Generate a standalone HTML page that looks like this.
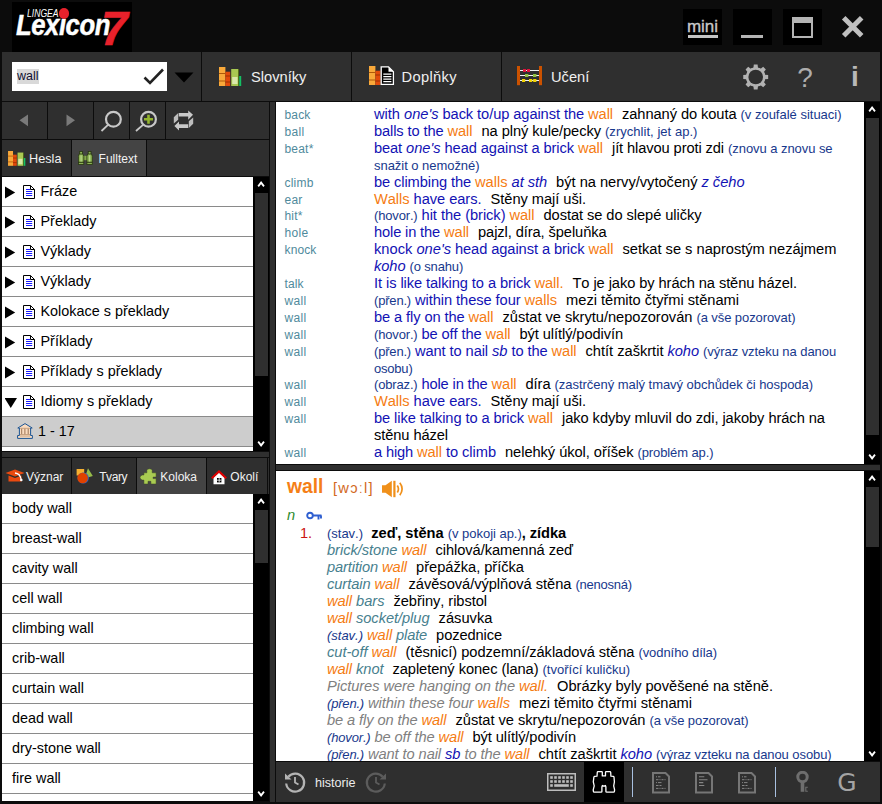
<!DOCTYPE html>
<html lang="cs">
<head>
<meta charset="utf-8">
<title>Lingea Lexicon 7</title>
<style>
*{box-sizing:border-box;margin:0;padding:0}
html,body{width:882px;height:804px;overflow:hidden;background:#0c0c0c}
body{position:relative;font-kerning:none;font-family:"Liberation Sans",Arial,sans-serif;font-size:15px;color:#000}
.abs{position:absolute}
#title{left:2px;top:0;width:878px;height:52px;background:#0c0c0c}
#logo{left:12px;top:2px;width:120px;height:50px;background:#000;overflow:hidden}
.wb{top:9px;width:39px;height:36px;background:#000}
#tool{left:2px;top:52px;width:878px;height:49px;background:#2f2f2f}
.vsep{width:1px;background:#0c0c0c}
#search{left:12px;top:62px;width:155px;height:29px;background:#fff}
.tbtxt{color:#f0f0f0;font-size:14.67px;top:68px;line-height:18px;white-space:nowrap}
#left{left:2px;top:102px;width:267px;height:699px;background:#2f2f2f}
.hline{height:1px;background:#0c0c0c}
.tab{color:#f2f2f2;font-size:12px;line-height:36px;white-space:nowrap;height:36px}
.tab.on{background:#444}
.list{background:#fff;overflow:hidden}
.row{position:absolute;left:0;width:252px;height:30px;border-bottom:1px solid #8a8a8a;line-height:28px;font-size:14.400px;white-space:nowrap}
.sb{background:#000;width:15px}
.thumb{background:#2f2f2f;width:13px;left:2px}
.arr{color:#fff;font-weight:bold;font-size:13px;width:15px;text-align:center;left:0;line-height:15px;font-family:"DejaVu Sans","Liberation Sans",sans-serif}
#rsplit{left:270px;top:102px;width:5px;height:700px;background:#2f2f2f}
.pane{background:#fff;overflow:hidden}
#bottom{left:276px;top:762px;width:604px;height:40px;background:#2f2f2f}
.ln{position:absolute;white-space:nowrap;line-height:17px;height:17px;font-size:14.67px}
.k{position:absolute;left:8.500px;color:#4f8a9c;font-size:12px}
.b{color:#1212b4}
.o{color:#f57c12}
.n{color:#17388c;font-size:13px}
.i{font-style:italic}
.g{color:#47808e;font-style:italic}
.e{color:#808080;font-style:italic}
.sp{display:inline-block;width:5px}
</style>
</head>
<body>
<!-- TITLE BAR -->
<div id="title" class="abs"></div>
<div id="logo" class="abs"><div class="abs" id="lg1" style="left:15px;top:5px;color:#fff;font-size:10.5px;line-height:12px;font-style:italic;transform-origin:0 0;transform:scaleX(0.82);white-space:nowrap">LINGEA</div><div class="abs" id="lg2" style="left:3.500px;top:5.800px;color:#fff;font-size:30px;line-height:34px;font-weight:bold;font-style:italic;transform-origin:0 0;transform:scaleX(0.855);white-space:nowrap;letter-spacing:-0.5px;-webkit-text-stroke:0.5px #fff">Lexicon</div><div class="abs" style="left:46.600px;top:6.200px;width:10.400px;height:10.400px;border-radius:50%;background:#e8212b"></div><div class="abs" id="lg3" style="left:89px;top:1px;color:#e8212b;font-size:48px;line-height:52px;font-weight:bold;font-style:italic;white-space:nowrap;-webkit-text-stroke:0.6px #e8212b">7</div></div>
<div class="abs wb" style="left:683px"></div>
<div class="abs wb" style="left:733px"></div>
<div class="abs wb" style="left:783px"></div>
<div class="abs" id="mini" style="left:683px;top:17px;width:39px;text-align:center;color:#c8c8c8;font-size:17px;line-height:20px;-webkit-text-stroke:0.35px #c8c8c8">mini</div>
<div class="abs" style="left:688px;top:35px;width:30px;height:3px;background:#c4c4c4"></div>
<div class="abs" style="left:741px;top:35px;width:22px;height:3px;background:#b4b4b4"></div>
<div class="abs" style="left:792px;top:17px;width:21px;height:21px;border:2px solid #b4b4b4;border-top-width:6px"></div>
<svg class="abs" style="left:840px;top:14px" width="26" height="26" viewBox="0 0 26 26"><path d="M3.700 3.700L21.700 21.700M21.700 3.700L3.700 21.700" stroke="#c0c0c0" stroke-width="5" fill="none"/></svg>
<!-- TOOLBAR -->
<div id="tool" class="abs"></div>
<div class="abs vsep" style="left:201px;top:52px;height:87px"></div>
<div class="abs vsep" style="left:351px;top:52px;height:49px"></div>
<div class="abs vsep" style="left:501px;top:52px;height:49px"></div>
<div id="search" class="abs"><span class="abs" style="left:5px;top:7px;height:15px;line-height:15px;font-size:12.500px;background:#d9d9d9;color:#101030;padding:0 0.500px 0 0">wall</span></div>
<svg class="abs" style="left:143px;top:68px" width="22" height="18" viewBox="0 0 22 18"><path d="M1.5 9.5L7 15L20 1.5" stroke="#222" stroke-width="2.6" fill="none"/></svg>
<svg class="abs" style="left:174px;top:72px" width="20" height="11" viewBox="0 0 20 11"><path d="M0.5 0.5H19.5L10 10.5Z" fill="#000"/></svg>
<svg class="abs" style="left:219px;top:67px" width="23" height="20" viewBox="0 0 23 20"><rect x="0" y="0" width="6.4" height="19" fill="#f9a93a"/><rect x="0" y="6" width="6.4" height="1" fill="#b05808"/><rect x="0" y="13.5" width="6.4" height="1" fill="#b05808"/><rect x="6.4" y="4.7" width="4.8" height="14.3" fill="#e24a0a"/><rect x="6.4" y="8.5" width="4.8" height="1" fill="#9a3000"/><rect x="6.4" y="14.5" width="4.8" height="1" fill="#9a3000"/><rect x="12.2" y="2" width="7.3" height="17" fill="#a9c852"/><rect x="13.2" y="10" width="5.3" height="7" fill="#dbe8ab"/><rect x="19.2" y="2" width="0.8" height="17" fill="#50700f"/><rect x="20.2" y="9" width="2" height="10" fill="#14c064"/></svg>
<svg class="abs" style="left:369px;top:66px" width="26" height="20" viewBox="0 0 26 20"><rect x="0" y="0" width="6.4" height="19" fill="#f9a93a"/><rect x="0" y="6" width="6.4" height="1" fill="#b05808"/><rect x="0" y="13.5" width="6.4" height="1" fill="#b05808"/><rect x="6.4" y="4.7" width="5" height="14.3" fill="#e24a0a"/><rect x="6.4" y="8.5" width="5" height="1" fill="#9a3000"/><rect x="6.4" y="14.5" width="5" height="1" fill="#9a3000"/><path d="M12.2 0.9H19.5L24.4 5.8V18.3H12.2Z" fill="#000" stroke="#fff" stroke-width="1.3"/><path d="M19.5 0.9V5.8H24.4Z" fill="#fff"/><path d="M14.3 8.2H22.4M14.3 10.7H22.4M14.3 13.2H22.4M14.3 15.7H22.4" stroke="#fff" stroke-width="1.2"/></svg>
<svg class="abs" style="left:517px;top:66px" width="25" height="20" viewBox="0 0 25 20"><path d="M3 4.500H22M3 9.500H22M3 14.500H22" stroke="#f4f4f4" stroke-width="1"/><rect x="0" y="0" width="3" height="19.2" fill="#cc5200"/><rect x="22" y="0" width="3" height="19.2" fill="#cc5200"/><rect x="6" y="3" width="3" height="3" fill="#e0143c"/><rect x="10" y="3" width="3" height="3" fill="#e0143c"/><rect x="8" y="8" width="3.400" height="3" fill="#92c23e"/><rect x="16" y="8" width="3.400" height="3" fill="#92c23e"/><rect x="5" y="13" width="3.200" height="3" fill="#f2d400"/><rect x="12" y="13" width="3.200" height="3" fill="#f2d400"/><rect x="16.200" y="13" width="3.200" height="3" fill="#f2d400"/></svg>
<div class="abs tbtxt" style="left:251px">Slovníky</div>
<div class="abs tbtxt" style="left:401.500px;letter-spacing:0.350px">Doplňky</div>
<div class="abs tbtxt" style="left:551px">Učení</div>
<svg class="abs" style="left:0;top:0" width="882" height="110"><path d="M753.42 67.68L753.82 64.54L757.58 64.54L757.98 67.68L760.68 68.79L763.18 66.86L765.84 69.52L763.91 72.02L765.02 74.72L768.16 75.12L768.16 78.88L765.02 79.28L763.91 81.98L765.84 84.48L763.18 87.14L760.68 85.21L757.98 86.32L757.58 89.46L753.82 89.46L753.42 86.32L750.72 85.21L748.22 87.14L745.56 84.48L747.49 81.98L746.38 79.28L743.24 78.88L743.24 75.12L746.38 74.72L747.49 72.02L745.56 69.52L748.22 66.86L750.72 68.79Z" fill="#b2b2b2"/><circle cx="755.7" cy="77" r="9.8" fill="#b2b2b2"/><circle cx="755.7" cy="77" r="7.3" fill="#2f2f2f"/></svg>
<div class="abs" style="left:790px;top:60px;width:30px;text-align:center;color:#adadad;font-size:28px;line-height:34px;margin-top:1px">?</div>
<div class="abs" style="left:840px;top:60px;width:30px;text-align:center;color:#b8b8b8;font-size:28px;line-height:34px;font-weight:bold">i</div>
<!-- LEFT PANEL -->
<div id="left" class="abs">
<div class="abs vsep" style="left:45px;top:0;height:37px"></div>
<div class="abs vsep" style="left:91px;top:0;height:37px"></div>
<div class="abs vsep" style="left:127px;top:0;height:37px"></div>
<div class="abs vsep" style="left:163px;top:0;height:37px"></div>
<div class="abs hline" style="left:0;top:37px;width:268px"></div>
<svg class="abs" style="left:0;top:0" width="200" height="37" viewBox="0 0 200 37"><path d="M17.5 18.3L26 12.5V24.2Z" fill="#7a7a7a"/><path d="M73 18.3L64.5 12.5V24.2Z" fill="#7a7a7a"/><circle cx="111.4" cy="17.3" r="7.4" fill="none" stroke="#c8c8c8" stroke-width="2.2"/><path d="M106 22.8L99.5 29" stroke="#c8c8c8" stroke-width="1.8"/><circle cx="146.5" cy="17.3" r="7.4" fill="none" stroke="#c8c8c8" stroke-width="2.2"/><path d="M141 22.8L134 29" stroke="#c8c8c8" stroke-width="1.8"/><path d="M146.5 12.8V21.8M142 17.3H151" stroke="#93b52e" stroke-width="2.6"/><g fill="#c9c9c9"><path d="M176.750 10.900H186.200V8.500L191 12.750L186.200 17.700V14.600H176.750Z"/><path d="M176.200 11L171.800 15.300V21.600L176.200 17.800Z" fill="#bdbdbd"/><path d="M186.200 22.200H177V19.400L172.400 24.100L177 28.500V26H186.200Z"/><path d="M186.800 26L191.200 21.700V15.400L186.800 19.200Z" fill="#bdbdbd"/></g></svg>
<div class="abs tab" style="left:0;top:38px;width:69px"><span class="abs" style="left:27px;font-size:12.700px;top:1px">Hesla</span></div>
<div class="abs vsep" style="left:69px;top:38px;height:36px"></div>
<div class="abs tab on" style="left:70px;top:38px;width:74px"><span class="abs" style="left:26.600px;font-size:12px;top:1px">Fulltext</span></div>
<div class="abs vsep" style="left:144px;top:38px;height:36px"></div>
<svg class="abs" style="left:5.700px;top:49px" width="18" height="15.6" viewBox="0 0 23 20"><rect x="0" y="0" width="6.4" height="19" fill="#f9a93a"/><rect x="0" y="6" width="6.4" height="1" fill="#b05808"/><rect x="0" y="13.5" width="6.4" height="1" fill="#b05808"/><rect x="6.4" y="4.7" width="4.8" height="14.3" fill="#e24a0a"/><rect x="6.4" y="8.5" width="4.8" height="1" fill="#9a3000"/><rect x="6.4" y="14.5" width="4.8" height="1" fill="#9a3000"/><rect x="12.2" y="2" width="7.3" height="17" fill="#a9c852"/><rect x="13.2" y="10" width="5.3" height="7" fill="#dbe8ab"/><rect x="19.2" y="2" width="0.8" height="17" fill="#50700f"/><rect x="20.2" y="9" width="2" height="10" fill="#14c064"/></svg>
<svg class="abs" style="left:76px;top:49px" width="15" height="14" viewBox="0 0 15 14"><rect x="5" y="4.800" width="5" height="4.400" fill="#84a84c"/><g fill="#8db354" stroke="#26340f" stroke-width="0.800"><rect x="1.700" y="0.400" width="2.800" height="3"/><rect x="10.200" y="0.400" width="2.800" height="3"/><path d="M1.200 3H5L5.800 5.200V11.300H0.400V5.200Z"/><path d="M9.700 3H13.500L14.300 5.200V11.300H8.900V5.200Z"/><rect x="0.400" y="11.300" width="5.400" height="2.200"/><rect x="8.900" y="11.300" width="5.400" height="2.200"/></g><path d="M3.100 4.300V10.500M11.600 4.300V10.500" stroke="#b9d68a" stroke-width="1.300"/></svg>
<div class="abs hline" style="left:0;top:74px;width:268px"></div>
<div class="abs list" style="left:0;top:75px;width:251px;height:274px">
<div class="row" style="top:0px"><svg class="abs" style="left:2.5px;top:8.5px" width="13" height="13"><path d="M0 0.500L10.200 6.500L0 12.500Z" fill="#000"/></svg><svg class="abs" style="left:21px;top:8px" width="12" height="14" viewBox="0 0 12 14"><path d="M0.500 0.500H7.500L11.500 4.500V13.500H0.500Z" fill="#fff" stroke="#000"/><path d="M7.500 0.500V4.500H11.500" fill="none" stroke="#000"/><path d="M3 4.500H7M3 6.500H9.200M3 8.500H9.200M3 10.500H9.200" stroke="#1a1aff" stroke-width="1"/></svg><span class="abs" style="left:38.500px;top:0">Fráze</span></div>
<div class="row" style="top:30px"><svg class="abs" style="left:2.5px;top:8.5px" width="13" height="13"><path d="M0 0.500L10.200 6.500L0 12.500Z" fill="#000"/></svg><svg class="abs" style="left:21px;top:8px" width="12" height="14" viewBox="0 0 12 14"><path d="M0.500 0.500H7.500L11.500 4.500V13.500H0.500Z" fill="#fff" stroke="#000"/><path d="M7.500 0.500V4.500H11.500" fill="none" stroke="#000"/><path d="M3 4.500H7M3 6.500H9.200M3 8.500H9.200M3 10.500H9.200" stroke="#1a1aff" stroke-width="1"/></svg><span class="abs" style="left:38.500px;top:0">Překlady</span></div>
<div class="row" style="top:60px"><svg class="abs" style="left:2.5px;top:8.5px" width="13" height="13"><path d="M0 0.500L10.200 6.500L0 12.500Z" fill="#000"/></svg><svg class="abs" style="left:21px;top:8px" width="12" height="14" viewBox="0 0 12 14"><path d="M0.500 0.500H7.500L11.500 4.500V13.500H0.500Z" fill="#fff" stroke="#000"/><path d="M7.500 0.500V4.500H11.500" fill="none" stroke="#000"/><path d="M3 4.500H7M3 6.500H9.200M3 8.500H9.200M3 10.500H9.200" stroke="#1a1aff" stroke-width="1"/></svg><span class="abs" style="left:38.500px;top:0">Výklady</span></div>
<div class="row" style="top:90px"><svg class="abs" style="left:2.5px;top:8.5px" width="13" height="13"><path d="M0 0.500L10.200 6.500L0 12.500Z" fill="#000"/></svg><svg class="abs" style="left:21px;top:8px" width="12" height="14" viewBox="0 0 12 14"><path d="M0.500 0.500H7.500L11.500 4.500V13.500H0.500Z" fill="#fff" stroke="#000"/><path d="M7.500 0.500V4.500H11.500" fill="none" stroke="#000"/><path d="M3 4.500H7M3 6.500H9.200M3 8.500H9.200M3 10.500H9.200" stroke="#1a1aff" stroke-width="1"/></svg><span class="abs" style="left:38.500px;top:0">Výklady</span></div>
<div class="row" style="top:120px"><svg class="abs" style="left:2.5px;top:8.5px" width="13" height="13"><path d="M0 0.500L10.200 6.500L0 12.500Z" fill="#000"/></svg><svg class="abs" style="left:21px;top:8px" width="12" height="14" viewBox="0 0 12 14"><path d="M0.500 0.500H7.500L11.500 4.500V13.500H0.500Z" fill="#fff" stroke="#000"/><path d="M7.500 0.500V4.500H11.500" fill="none" stroke="#000"/><path d="M3 4.500H7M3 6.500H9.200M3 8.500H9.200M3 10.500H9.200" stroke="#1a1aff" stroke-width="1"/></svg><span class="abs" style="left:38.500px;top:0">Kolokace s překlady</span></div>
<div class="row" style="top:150px"><svg class="abs" style="left:2.5px;top:8.5px" width="13" height="13"><path d="M0 0.500L10.200 6.500L0 12.500Z" fill="#000"/></svg><svg class="abs" style="left:21px;top:8px" width="12" height="14" viewBox="0 0 12 14"><path d="M0.500 0.500H7.500L11.500 4.500V13.500H0.500Z" fill="#fff" stroke="#000"/><path d="M7.500 0.500V4.500H11.500" fill="none" stroke="#000"/><path d="M3 4.500H7M3 6.500H9.200M3 8.500H9.200M3 10.500H9.200" stroke="#1a1aff" stroke-width="1"/></svg><span class="abs" style="left:38.500px;top:0">Příklady</span></div>
<div class="row" style="top:180px"><svg class="abs" style="left:2.5px;top:8.5px" width="13" height="13"><path d="M0 0.500L10.200 6.500L0 12.500Z" fill="#000"/></svg><svg class="abs" style="left:21px;top:8px" width="12" height="14" viewBox="0 0 12 14"><path d="M0.500 0.500H7.500L11.500 4.500V13.500H0.500Z" fill="#fff" stroke="#000"/><path d="M7.500 0.500V4.500H11.500" fill="none" stroke="#000"/><path d="M3 4.500H7M3 6.500H9.200M3 8.500H9.200M3 10.500H9.200" stroke="#1a1aff" stroke-width="1"/></svg><span class="abs" style="left:38.500px;top:0">Příklady s překlady</span></div>
<div class="row" style="top:210px"><svg class="abs" style="left:2.5px;top:8.5px" width="13" height="13"><path d="M-0.500 2H12L5.750 12Z" fill="#000"/></svg><svg class="abs" style="left:21px;top:8px" width="12" height="14" viewBox="0 0 12 14"><path d="M0.500 0.500H7.500L11.500 4.500V13.500H0.500Z" fill="#fff" stroke="#000"/><path d="M7.500 0.500V4.500H11.500" fill="none" stroke="#000"/><path d="M3 4.500H7M3 6.500H9.200M3 8.500H9.200M3 10.500H9.200" stroke="#1a1aff" stroke-width="1"/></svg><span class="abs" style="left:38.500px;top:0">Idiomy s překlady</span></div>
<div class="row" style="top:240px;background:#cdcdcd"><span class="abs" style="left:36px;top:0">1 - 17</span><svg class="abs" style="left:14.800px;top:6px" width="16" height="16" viewBox="0 0 16 16"><path d="M8 0.600L15.200 5H13.600V12.500H15.400V15.400H0.600V12.500H2.400V5H0.800Z" fill="#fbdcc0" stroke="#1a5494" stroke-width="1"/><path d="M4.700 5.500V11.500M7.900 5.500V11.500M11.200 5.500V11.500" stroke="#9c7454" stroke-width="1"/><path d="M3 5.300H13M3 11.500H13M3 13H13" stroke="#c29c7c" stroke-width="0.900"/></svg></div>
</div>
<div class="abs sb" style="left:251px;top:75px;height:274px;width:16px"><svg class="abs" style="left:0;top:0" width="16" height="15"><path d="M5.200 9.400L8.100 5.600L11 9.400" stroke="#fff" stroke-width="1.800" fill="none"/></svg><div class="abs thumb" style="top:16px;height:183px"></div><svg class="abs" style="left:0;bottom:0" width="16" height="15"><path d="M5.200 5.600L8.100 9.400L11 5.600" stroke="#fff" stroke-width="1.800" fill="none"/></svg></div>
<div class="abs" style="left:0;top:349px;width:268px;height:1px;background:#0c0c0c"></div>
<div class="abs" style="left:0;top:355px;width:268px;height:1px;background:#0c0c0c"></div>
<div class="abs tab" style="left:0px;top:356px;width:69px;overflow:hidden"><span class="abs" style="left:24px;top:1px">Význar</span></div>
<div class="abs vsep" style="left:69px;top:356px;height:36px"></div>
<div class="abs tab" style="left:70px;top:356px;width:64px;overflow:hidden"><span class="abs" style="left:27.200px;top:1px;letter-spacing:-0.400px">Tvary</span></div>
<div class="abs vsep" style="left:134px;top:356px;height:36px"></div>
<div class="abs tab on" style="left:135px;top:356px;width:69px;overflow:hidden"><span class="abs" style="left:23.3px;top:1px">Koloka</span></div>
<div class="abs vsep" style="left:204px;top:356px;height:36px"></div>
<div class="abs tab" style="left:205px;top:356px;width:60px;overflow:hidden"><span class="abs" style="left:23.3px;top:1px">Okolí</span></div>
<div class="abs vsep" style="left:265px;top:356px;height:36px"></div>
<svg class="abs" style="left:3px;top:367px" width="20" height="14" viewBox="0 0 20 14"><path d="M10 0.500L19.500 4L10 7.500L0.500 4Z" fill="#ea4a10"/><path d="M3.500 6.500L10 9L16.500 6.500V12.500H3.500Z" fill="#ea4a10"/><path d="M10 4C14 4.500 15.500 6.500 16.200 10.500" stroke="#fff" stroke-width="1.300" fill="none"/><circle cx="16.300" cy="11" r="1.300" fill="#fff"/></svg>
<svg class="abs" style="left:74px;top:366px" width="18" height="16" viewBox="0 0 18 16"><rect x="0.600" y="1" width="7.600" height="6.500" fill="#f6b030"/><path d="M12 0.300L16.800 8L8.500 10.500Z" fill="#96bc4a"/><circle cx="7.200" cy="10" r="5.600" fill="#3563c4"/><circle cx="6.600" cy="10" r="5.300" fill="#e04200"/></svg>
<svg class="abs" style="left:135px;top:362px" width="24" height="24" viewBox="0 0 24 24"><path d="M6.900 8.800H9.850V6.300Q9.850 4.800 12.500 4.800Q15.200 4.800 15.200 6.300V8.800H19.100V13.100H16.100V14.600H19.100V20H13.900V17.300H11V20H6.900V16.100H5.200Q3 15.200 3 13.550Q3 11.900 5.200 11H6.900Z" fill="#a9cb52" stroke="#3a4526" stroke-width="0.500"/></svg>
<svg class="abs" style="left:209px;top:368px" width="16" height="15" viewBox="0 0 16 15"><path d="M2.500 7.500L8 2.500L13.500 7.500V14.300H2.500Z" fill="#fff"/><path d="M0.800 8.300L8 1.500L15.200 8.300" stroke="#e00000" stroke-width="2" fill="none"/><rect x="6" y="8" width="4.400" height="4.400" fill="#000"/><path d="M8.200 8V12.400M6 10.200H10.400" stroke="#fff" stroke-width="0.800"/></svg>
<div class="abs hline" style="left:0;top:392px;width:268px"></div>
<div class="abs list" style="left:0;top:392px;width:251px;height:307px">
<div class="row" style="top:0px"><span class="abs" style="left:10px;top:0">body wall</span></div>
<div class="row" style="top:30px"><span class="abs" style="left:10px;top:0">breast-wall</span></div>
<div class="row" style="top:60px"><span class="abs" style="left:10px;top:0">cavity wall</span></div>
<div class="row" style="top:90px"><span class="abs" style="left:10px;top:0">cell wall</span></div>
<div class="row" style="top:120px"><span class="abs" style="left:10px;top:0">climbing wall</span></div>
<div class="row" style="top:150px"><span class="abs" style="left:10px;top:0">crib-wall</span></div>
<div class="row" style="top:180px"><span class="abs" style="left:10px;top:0">curtain wall</span></div>
<div class="row" style="top:210px"><span class="abs" style="left:10px;top:0">dead wall</span></div>
<div class="row" style="top:240px"><span class="abs" style="left:10px;top:0">dry-stone wall</span></div>
<div class="row" style="top:270px"><span class="abs" style="left:10px;top:0">fire wall</span></div>
<div class="row" style="top:300px"><span class="abs" style="left:10px;top:0"></span></div>
</div>
<div class="abs sb" style="left:251px;top:392px;height:307px;width:16px"><svg class="abs" style="left:0;top:0" width="16" height="15"><path d="M5.200 9.400L8.100 5.600L11 9.400" stroke="#fff" stroke-width="1.800" fill="none"/></svg><div class="abs thumb" style="top:16px;height:53px"></div><svg class="abs" style="left:0;bottom:0" width="16" height="15"><path d="M5.200 5.600L8.100 9.400L11 5.600" stroke="#fff" stroke-width="1.800" fill="none"/></svg></div>
</div>
<div id="rsplit" class="abs"></div>
<!-- RIGHT PANES -->
<div id="p1" class="abs pane" style="left:276px;top:102px;width:588px;height:362px">
<div class="ln" style="left:0;top:5.0px"><span class="k"><span style="letter-spacing:0.163px">back</span></span></div>
<div class="ln" style="left:98px;top:4.0px"><span class="b"><span style="letter-spacing:-0.027px">with </span><i><span style="letter-spacing:-0.017px">one's</span></i><span style="letter-spacing:-0.086px"> back to/up against the </span></span><span class="o"><span style="letter-spacing:-0.062px">wall</span></span><span class="sp"></span><span style="letter-spacing:-0.076px"> zahnaný do kouta </span><span class="n"><span style="letter-spacing:-0.008px">(v zoufalé situaci)</span></span></div>
<div class="ln" style="left:0;top:21.9px"><span class="k"><span style="letter-spacing:0.330px">ball</span></span></div>
<div class="ln" style="left:98px;top:20.9px"><span class="b"><span style="letter-spacing:-0.113px">balls to the </span></span><span class="o"><span style="letter-spacing:-0.062px">wall</span></span><span class="sp"></span><span style="letter-spacing:-0.063px"> na plný kule/pecky </span><span class="n"><span style="letter-spacing:0.040px">(zrychlit, jet ap.)</span></span></div>
<div class="ln" style="left:0;top:38.8px"><span class="k"><span style="letter-spacing:0.195px">beat*</span></span></div>
<div class="ln" style="left:98px;top:37.8px"><span class="b"><span style="letter-spacing:-0.119px">beat </span><i><span style="letter-spacing:-0.017px">one's</span></i><span style="letter-spacing:-0.084px"> head against a brick </span></span><span class="o"><span style="letter-spacing:-0.062px">wall</span></span><span class="sp"></span><span style="letter-spacing:-0.100px"> jít hlavou proti zdi </span><span class="n"><span style="letter-spacing:-0.059px">(znovu a znovu se</span></span></div>
<div class="ln" style="left:98px;top:54.7px"><span class="n"><span style="letter-spacing:-0.042px">snažit o nemožné)</span></span></div>
<div class="ln" style="left:0;top:72.6px"><span class="k"><span style="letter-spacing:0.200px">climb</span></span></div>
<div class="ln" style="left:98px;top:71.6px"><span class="b"><span style="letter-spacing:-0.105px">be climbing the </span></span><span class="o"><span style="letter-spacing:-0.017px">walls</span></span><span class="b"> <i><span style="letter-spacing:-0.059px">at sth</span></i></span><span class="sp"></span><span style="letter-spacing:-0.019px"> být na nervy/vytočený </span><span class="b"><i><span style="letter-spacing:-0.033px">z čeho</span></i></span></div>
<div class="ln" style="left:0;top:89.5px"><span class="k"><span style="letter-spacing:0.219px">ear</span></span></div>
<div class="ln" style="left:98px;top:88.5px"><span class="o"><span style="letter-spacing:-0.066px">Walls</span></span><span class="b"><span style="letter-spacing:-0.047px"> have ears.</span></span><span class="sp"></span><span style="letter-spacing:-0.045px"> Stěny mají uši.</span></div>
<div class="ln" style="left:0;top:106.4px"><span class="k"><span style="letter-spacing:0.164px">hit*</span></span></div>
<div class="ln" style="left:98px;top:105.4px"><span class="n"><span style="letter-spacing:-0.161px">(hovor.)</span></span><span class="b"><span style="letter-spacing:-0.051px"> hit the (brick) </span></span><span class="o"><span style="letter-spacing:-0.062px">wall</span></span><span class="sp"></span><span style="letter-spacing:-0.069px"> dostat se do slepé uličky</span></div>
<div class="ln" style="left:0;top:123.3px"><span class="k"><span style="letter-spacing:0.328px">hole</span></span></div>
<div class="ln" style="left:98px;top:122.3px"><span class="b"><span style="letter-spacing:-0.142px">hole in the </span></span><span class="o"><span style="letter-spacing:-0.062px">wall</span></span><span class="sp"></span><span style="letter-spacing:-0.088px"> pajzl, díra, špeluňka</span></div>
<div class="ln" style="left:0;top:140.2px"><span class="k"><span style="letter-spacing:0.130px">knock</span></span></div>
<div class="ln" style="left:98px;top:139.2px"><span class="b"><span style="letter-spacing:0.020px">knock </span><i><span style="letter-spacing:-0.017px">one's</span></i><span style="letter-spacing:-0.084px"> head against a brick </span></span><span class="o"><span style="letter-spacing:-0.062px">wall</span></span><span class="sp"></span><span style="letter-spacing:-0.013px"> setkat se s naprostým nezájmem</span></div>
<div class="ln" style="left:98px;top:156.1px"><span class="b"><i><span style="letter-spacing:-0.072px">koho</span></i></span> <span class="n"><span style="letter-spacing:-0.158px">(o snahu)</span></span></div>
<div class="ln" style="left:0;top:174.0px"><span class="k"><span style="letter-spacing:0.082px">talk</span></span></div>
<div class="ln" style="left:98px;top:173.0px"><span class="b"><span style="letter-spacing:-0.081px">It is like talking to a brick </span></span><span class="o"><span style="letter-spacing:-0.064px">wall.</span></span><span class="sp"></span><span style="letter-spacing:-0.081px"> To je jako by hrách na stěnu házel.</span></div>
<div class="ln" style="left:0;top:190.9px"><span class="k"><span style="letter-spacing:0.332px">wall</span></span></div>
<div class="ln" style="left:98px;top:189.9px"><span class="n"><span style="letter-spacing:-0.184px">(přen.)</span></span><span class="b"><span style="letter-spacing:-0.072px"> within these four </span></span><span class="o"><span style="letter-spacing:-0.017px">walls</span></span><span class="sp"></span><span style="letter-spacing:-0.023px"> mezi těmito čtyřmi stěnami</span></div>
<div class="ln" style="left:0;top:207.8px"><span class="k"><span style="letter-spacing:0.332px">wall</span></span></div>
<div class="ln" style="left:98px;top:206.8px"><span class="b"><span style="letter-spacing:-0.103px">be a fly on the </span></span><span class="o"><span style="letter-spacing:-0.062px">wall</span></span><span class="sp"></span><span style="letter-spacing:-0.028px"> zůstat ve skrytu/nepozorován </span><span class="n"><span style="letter-spacing:-0.084px">(a vše pozorovat)</span></span></div>
<div class="ln" style="left:0;top:224.7px"><span class="k"><span style="letter-spacing:0.332px">wall</span></span></div>
<div class="ln" style="left:98px;top:223.7px"><span class="n"><span style="letter-spacing:-0.161px">(hovor.)</span></span><span class="b"><span style="letter-spacing:-0.105px"> be off the </span></span><span class="o"><span style="letter-spacing:-0.062px">wall</span></span><span class="sp"></span><span style="letter-spacing:-0.089px"> být ulítlý/podivín</span></div>
<div class="ln" style="left:0;top:241.6px"><span class="k"><span style="letter-spacing:0.332px">wall</span></span></div>
<div class="ln" style="left:98px;top:240.6px"><span class="n"><span style="letter-spacing:-0.184px">(přen.)</span></span><span class="b"><span style="letter-spacing:-0.092px"> want to nail </span><i><span style="letter-spacing:0.007px">sb</span></i><span style="letter-spacing:-0.102px"> to the </span></span><span class="o"><span style="letter-spacing:-0.062px">wall</span></span><span class="sp"></span><span style="letter-spacing:-0.022px"> chtít zaškrtit </span><span class="b"><i><span style="letter-spacing:-0.072px">koho</span></i></span> <span class="n"><span style="letter-spacing:-0.064px">(výraz vzteku na danou</span></span></div>
<div class="ln" style="left:98px;top:257.5px"><span class="n"><span style="letter-spacing:-0.208px">osobu)</span></span></div>
<div class="ln" style="left:0;top:275.4px"><span class="k"><span style="letter-spacing:0.332px">wall</span></span></div>
<div class="ln" style="left:98px;top:274.4px"><span class="n"><span style="letter-spacing:-0.161px">(obraz.)</span></span><span class="b"><span style="letter-spacing:-0.137px"> hole in the </span></span><span class="o"><span style="letter-spacing:-0.062px">wall</span></span><span class="sp"></span><span style="letter-spacing:-0.066px"> díra </span><span class="n"><span style="letter-spacing:-0.038px">(zastrčený malý tmavý obchůdek či hospoda)</span></span></div>
<div class="ln" style="left:0;top:292.3px"><span class="k"><span style="letter-spacing:0.332px">wall</span></span></div>
<div class="ln" style="left:98px;top:291.3px"><span class="o"><span style="letter-spacing:-0.066px">Walls</span></span><span class="b"><span style="letter-spacing:-0.047px"> have ears.</span></span><span class="sp"></span><span style="letter-spacing:-0.045px"> Stěny mají uši.</span></div>
<div class="ln" style="left:0;top:309.2px"><span class="k"><span style="letter-spacing:0.332px">wall</span></span></div>
<div class="ln" style="left:98px;top:308.2px"><span class="b"><span style="letter-spacing:-0.090px">be like talking to a brick </span></span><span class="o"><span style="letter-spacing:-0.062px">wall</span></span><span class="sp"></span><span style="letter-spacing:-0.065px"> jako kdyby mluvil do zdi, jakoby hrách na</span></div>
<div class="ln" style="left:98px;top:325.1px"><span style="letter-spacing:-0.089px">stěnu házel</span></div>
<div class="ln" style="left:0;top:343.0px"><span class="k"><span style="letter-spacing:0.332px">wall</span></span></div>
<div class="ln" style="left:98px;top:342.0px"><span class="b"><span style="letter-spacing:-0.144px">a high </span></span><span class="o"><span style="letter-spacing:-0.062px">wall</span></span><span class="b"><span style="letter-spacing:-0.066px"> to climb</span></span><span class="sp"></span><span style="letter-spacing:-0.055px"> nelehký úkol, oříšek </span><span class="n"><span style="letter-spacing:-0.101px">(problém ap.)</span></span></div>
</div>
<div class="abs sb" style="left:864px;top:102px;height:362px;width:16px"><svg class="abs" style="left:0;top:0" width="16" height="15"><path d="M5.200 9.400L8.100 5.600L11 9.400" stroke="#fff" stroke-width="1.800" fill="none"/></svg><div class="abs thumb" style="top:16px;height:317px"></div><svg class="abs" style="left:0;bottom:0" width="16" height="15"><path d="M5.200 5.600L8.100 9.400L11 5.600" stroke="#fff" stroke-width="1.800" fill="none"/></svg></div>
<div class="abs" style="left:276px;top:465px;width:604px;height:5px;background:#2f2f2f"></div>
<div id="p2" class="abs pane" style="left:276px;top:471px;width:588px;height:290px">
<div class="abs" style="left:11px;top:5px;font-size:19.300px;font-weight:bold;color:#f57f17;line-height:22px;white-space:nowrap">wall</div>
<div class="abs" style="left:57px;top:8px;font-size:14.67px;color:#d2691e;line-height:18px;white-space:nowrap;letter-spacing:1.250px">[wɔːl]</div>
<svg class="abs" style="left:105px;top:9px" width="24" height="18" viewBox="0 0 24 18"><path d="M1 5.200H4.500L10.800 0.800V17.200L4.500 12.800H1Z" fill="#f0901a"></path><rect x="12.300" y="0.800" width="2.200" height="16.400" fill="#f0901a"></rect><path d="M16.300 5.500Q18.600 9 16.300 12.500M18.800 2.800Q23.400 9 18.800 15.200" stroke="#f0901a" stroke-width="1.700" fill="none"></path></svg>
<div class="abs" style="left:11px;top:36px;font-size:14.67px;color:#2e8b2e;font-style:italic;line-height:17px">n</div>
<svg class="abs" style="left:30px;top:40px" width="16" height="11" viewBox="0 0 16 11"><circle cx="4" cy="4.500" r="2.800" fill="none" stroke="#2f5fd0" stroke-width="1.900"></circle><path d="M7 4.500H15.500M12.500 4.500V8.500M15 4.500V7.500" stroke="#2f5fd0" stroke-width="1.900" fill="none"></path></svg>
<div class="ln" style="left:24px;top:54px;color:#cc1414"><span style="letter-spacing:-0.112px">1.</span></div>
<div class="ln" style="left:51px;top:54px"><span class="n"><span style="letter-spacing:-0.016px">(stav.)</span></span>&nbsp; <b><span style="letter-spacing:0.005px">zeď, stěna</span></b> <span class="n"><span style="letter-spacing:-0.030px">(v pokoji ap.)</span></span><b><span style="letter-spacing:-0.044px">, zídka</span></b></div>
<div class="ln" style="left:51px;top:71px"><span class="g"><span style="letter-spacing:-0.039px">brick/stone </span></span><span class="o i"><span style="letter-spacing:-0.062px">wall</span></span><span class="sp"></span><span style="letter-spacing:-0.058px"> cihlová/kamenná zeď</span></div>
<div class="ln" style="left:51px;top:88px"><span class="g"><span style="letter-spacing:-0.121px">partition </span></span><span class="o i"><span style="letter-spacing:-0.062px">wall</span></span><span class="sp"></span><span style="letter-spacing:-0.026px"> přepážka, příčka</span></div>
<div class="ln" style="left:51px;top:105px"><span class="g"><span style="letter-spacing:-0.071px">curtain </span></span><span class="o i"><span style="letter-spacing:-0.062px">wall</span></span><span class="sp"></span><span style="letter-spacing:-0.038px"> závěsová/výplňová stěna </span><span class="n"><span style="letter-spacing:-0.226px">(nenosná)</span></span></div>
<div class="ln" style="left:51px;top:122px"><span class="o i"><span style="letter-spacing:-0.062px">wall</span></span><span class="g"><span style="letter-spacing:-0.018px"> bars</span></span><span class="sp"></span><span style="letter-spacing:-0.063px"> žebřiny, ribstol</span></div>
<div class="ln" style="left:51px;top:139px"><span class="o i"><span style="letter-spacing:-0.062px">wall</span></span><span class="g"><span style="letter-spacing:-0.061px"> socket/plug</span></span><span class="sp"></span><span style="letter-spacing:0.017px"> zásuvka</span></div>
<div class="ln" style="left:51px;top:156px"><span class="n i"><span style="letter-spacing:-0.016px">(stav.)</span></span> <span class="o i"><span style="letter-spacing:-0.062px">wall</span></span><span class="g"><span style="letter-spacing:-0.142px"> plate</span></span><span class="sp"></span><span style="letter-spacing:-0.091px"> pozednice</span></div>
<div class="ln" style="left:51px;top:173px"><span class="g"><span style="letter-spacing:-0.038px">cut-off </span></span><span class="o i"><span style="letter-spacing:-0.062px">wall</span></span><span class="sp"></span><span style="letter-spacing:-0.049px"> (těsnicí) podzemní/základová stěna </span><span class="n"><span style="letter-spacing:-0.071px">(vodního díla)</span></span></div>
<div class="ln" style="left:51px;top:190px"><span class="o i"><span style="letter-spacing:-0.062px">wall</span></span><span class="g"><span style="letter-spacing:-0.056px"> knot</span></span><span class="sp"></span><span style="letter-spacing:-0.068px"> zapletený konec (lana) </span><span class="n"><span style="letter-spacing:0.006px">(tvořící kuličku)</span></span></div>
<div class="ln" style="left:51px;top:207px"><span class="e"><span style="letter-spacing:-0.066px">Pictures were hanging on the </span></span><span class="o i"><span style="letter-spacing:-0.064px">wall.</span></span><span class="sp"></span><span style="letter-spacing:-0.026px"> Obrázky byly pověšené na stěně.</span></div>
<div class="ln" style="left:51px;top:224px"><span class="n i"><span style="letter-spacing:-0.184px">(přen.)</span></span><span class="e"><span style="letter-spacing:-0.072px"> within these four </span></span><span class="o i"><span style="letter-spacing:-0.017px">walls</span></span><span class="sp"></span><span style="letter-spacing:-0.023px"> mezi těmito čtyřmi stěnami</span></div>
<div class="ln" style="left:51px;top:241px"><span class="e"><span style="letter-spacing:-0.103px">be a fly on the </span></span><span class="o i"><span style="letter-spacing:-0.062px">wall</span></span><span class="sp"></span><span style="letter-spacing:-0.028px"> zůstat ve skrytu/nepozorován </span><span class="n"><span style="letter-spacing:-0.084px">(a vše pozorovat)</span></span></div>
<div class="ln" style="left:51px;top:258px"><span class="n i"><span style="letter-spacing:-0.161px">(hovor.)</span></span><span class="e"><span style="letter-spacing:-0.105px"> be off the </span></span><span class="o i"><span style="letter-spacing:-0.062px">wall</span></span><span class="sp"></span><span style="letter-spacing:-0.089px"> být ulítlý/podivín</span></div>
<div class="ln" style="left:51px;top:275px"><span class="n i"><span style="letter-spacing:-0.184px">(přen.)</span></span><span class="e"><span style="letter-spacing:-0.092px"> want to nail </span></span><span class="b"><i><span style="letter-spacing:0.007px">sb</span></i></span><span class="e"><span style="letter-spacing:-0.102px"> to the </span></span><span class="o i"><span style="letter-spacing:-0.062px">wall</span></span><span class="sp"></span><span style="letter-spacing:-0.022px"> chtít zaškrtit </span><span class="b"><i><span style="letter-spacing:-0.072px">koho</span></i></span> <span class="n"><span style="letter-spacing:-0.078px">(výraz vzteku na danou osobu)</span></span></div>
</div>
<div class="abs sb" style="left:864px;top:471px;height:290px;width:16px"><svg class="abs" style="left:0;top:0" width="16" height="15"><path d="M5.200 9.400L8.100 5.600L11 9.400" stroke="#fff" stroke-width="1.800" fill="none"/></svg><div class="abs thumb" style="top:16px;height:60px"></div><svg class="abs" style="left:0;bottom:0" width="16" height="15"><path d="M5.200 5.600L8.100 9.400L11 5.600" stroke="#fff" stroke-width="1.800" fill="none"/></svg></div>
<div id="bottom" class="abs">
<svg class="abs" style="left:7px;top:8px" width="24" height="24" viewBox="0 0 24 24"><path d="M5.300 6.800A9 9 0 1 1 3.200 13.500" fill="none" stroke="#b4b4b4" stroke-width="2.200"/><path d="M2 3.500L8.500 9.500H2Z" fill="#b4b4b4"/><path d="M12 7V12.500L15.500 14.500" fill="none" stroke="#b4b4b4" stroke-width="1.800"/></svg>
<div class="abs" style="left:39px;top:13px;color:#ececec;font-size:12.600px;line-height:16px">historie</div>
<svg class="abs" style="left:88px;top:8px" width="24" height="24" viewBox="0 0 24 24"><path d="M18.700 6.800A9 9 0 1 0 20.800 13.500" fill="none" stroke="#5c5c5c" stroke-width="2.200"/><path d="M22 3.500L15.500 9.500H22Z" fill="#5c5c5c"/><path d="M12 7V12.500L15.500 14.500" fill="none" stroke="#5c5c5c" stroke-width="1.800"/></svg>
<svg class="abs" style="left:271px;top:11px" width="29" height="18" viewBox="0 0 29 18"><rect x="0.750" y="0.750" width="27.500" height="16.500" fill="none" stroke="#bdbdbd" stroke-width="1.500"/><rect x="3.2" y="3.2" width="2.600" height="2.600" fill="#bdbdbd"/><rect x="7.2" y="3.2" width="2.600" height="2.600" fill="#bdbdbd"/><rect x="11.2" y="3.2" width="2.600" height="2.600" fill="#bdbdbd"/><rect x="15.2" y="3.2" width="2.600" height="2.600" fill="#bdbdbd"/><rect x="19.2" y="3.2" width="2.600" height="2.600" fill="#bdbdbd"/><rect x="23.2" y="3.2" width="2.600" height="2.600" fill="#bdbdbd"/><rect x="3.2" y="7.2" width="2.600" height="2.600" fill="#bdbdbd"/><rect x="7.2" y="7.2" width="2.600" height="2.600" fill="#bdbdbd"/><rect x="11.2" y="7.2" width="2.600" height="2.600" fill="#bdbdbd"/><rect x="15.2" y="7.2" width="2.600" height="2.600" fill="#bdbdbd"/><rect x="19.2" y="7.2" width="2.600" height="2.600" fill="#bdbdbd"/><rect x="23.2" y="7.2" width="2.600" height="2.600" fill="#bdbdbd"/><rect x="3.2" y="11.2" width="2.600" height="2.600" fill="#bdbdbd"/><rect x="23.2" y="11.2" width="2.600" height="2.600" fill="#bdbdbd"/><rect x="7.200" y="11.200" width="14.600" height="2.600" fill="#bdbdbd"/></svg>
<div class="abs" style="left:308px;top:0;width:40px;height:40px;background:#000"></div>
<svg class="abs" style="left:308px;top:0" width="40" height="39" viewBox="0 0 40 39"><path d="M13.300 10.300Q13.300 9.700 14 9.700H17.600Q18.300 9.700 18.300 10.300V13.900H21.500V10.300Q21.500 9.700 22.200 9.700H25.900Q26.600 9.700 26.700 10.300L26.900 14.200L29.400 14.300Q30 14.400 30 15L30.400 19.900L29.700 23.900L30.600 27.900L30.400 29.300Q30.300 30.100 29.600 30.100H22.700Q21.900 30.100 21.900 29.400V24.900L21.400 23.500L19.900 24.100L18.400 23.500L17.900 24.900V29.400Q17.900 30.100 17.200 30.100H10.200Q9.500 30.100 9.400 29.300L9.200 27.900L10.200 23.900L9.300 19.900L9.900 15Q10 14.400 10.600 14.300L13 14.200Z" fill="#000" stroke="#fff" stroke-width="1.300" stroke-linejoin="round"/></svg>
<div class="abs" style="left:356px;top:5px;width:1px;height:30px;background:#a8c0e0"></div>
<svg class="abs" style="left:376px;top:9.500px" width="19" height="22" viewBox="0 0 19 22"><path d="M1 1H13.500L17 4.500V20.500H1Z" fill="none" stroke="#767676" stroke-width="2"/><path d="M4 4.800H5M6 4.800H8.500M4 7.700H6.500M7.500 7.700H8.500M9.500 7.700H11.500M12.500 7.700H13.500M4 10.600H5M6 10.600H9.500M4 13.500H6.500M7.500 13.500H9.500M4 16.400H6.500M7.500 16.400H8.500M9.500 16.400H11.500M12.500 16.400H13.500" stroke="#858585" stroke-width="1"/></svg>
<svg class="abs" style="left:419px;top:9.500px" width="19" height="22" viewBox="0 0 19 22"><path d="M1 1H13.500L17 4.500V20.500H1Z" fill="none" stroke="#767676" stroke-width="2"/><path d="M4 4.800H9.300M4 7.700H12.500M4 10.600H8.300M4 13.500H9.300" stroke="#858585" stroke-width="1.100"/></svg>
<svg class="abs" style="left:462px;top:9.500px" width="19" height="22" viewBox="0 0 19 22"><path d="M1 1H13.500L17 4.500V20.500H1Z" fill="none" stroke="#767676" stroke-width="2"/><path d="M4 4.800H5M6 4.800H8.500M4 7.700H6.500M7.500 7.700H8.500M9.500 7.700H11.500M12.500 7.700H13.500M4 10.600H5M6 10.600H9.500M4 13.500H6.500M7.500 13.500H9.500M4 16.400H6.500M7.500 16.400H8.500M9.500 16.400H11.500M12.500 16.400H13.500" stroke="#858585" stroke-width="1"/></svg>
<div class="abs" style="left:499px;top:5px;width:1px;height:30px;background:#a8c0e0"></div>
<svg class="abs" style="left:519px;top:9px" width="16" height="22" viewBox="0 0 16 22"><circle cx="7.500" cy="6" r="4.700" fill="none" stroke="#6e6e6e" stroke-width="3"/><path d="M7.500 11V20.800" stroke="#6e6e6e" stroke-width="3.600"/><path d="M12.800 16.300H10.800V20.200H12.800" stroke="#6e6e6e" stroke-width="1.100" fill="none"/></svg>
<div class="abs" style="left:556px;top:3px;width:30px;text-align:center;color:#a4a4a4;font-size:25px;line-height:34px;margin-top:1px;font-family:'DejaVu Sans',sans-serif">G</div>
</div>
</body>
</html>
